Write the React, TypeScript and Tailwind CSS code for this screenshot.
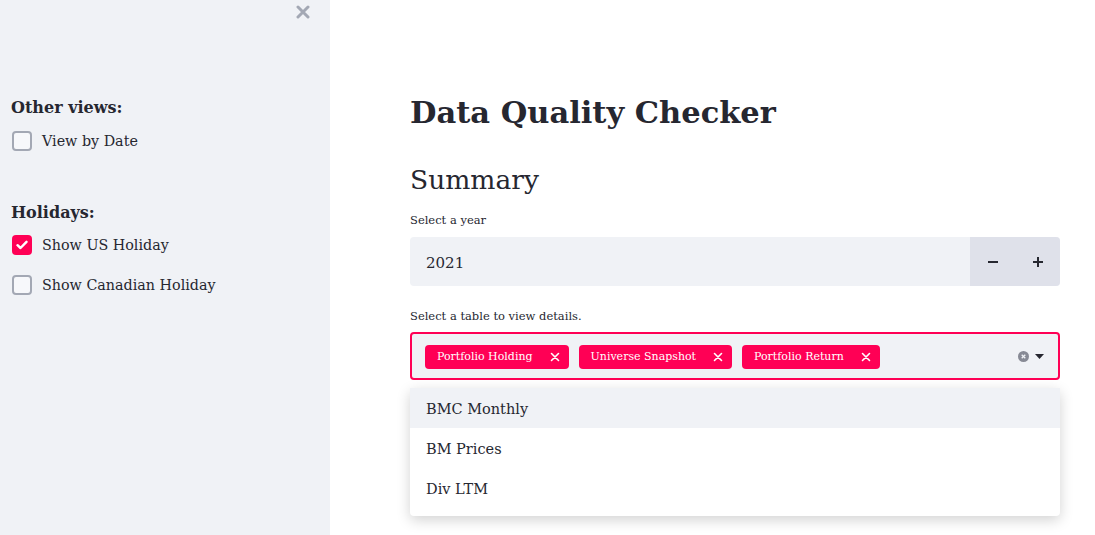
import React from "react";

const serif = "font-['DejaVu_Serif',serif]";

function Checkbox({ label, checked }: { label: string; checked?: boolean }) {
  return (
    <label className="flex items-center gap-[10px] h-[20px]">
      {checked ? (
        <span className="w-[20px] h-[20px] rounded-[4px] bg-[#ff0055] flex items-center justify-center">
          <svg width="12" height="10" viewBox="0 0 12 10">
            <path d="M1.5 5.2 L4.5 8 L10.5 1.8" fill="none" stroke="white" strokeWidth="2.4" strokeLinecap="round" strokeLinejoin="round" />
          </svg>
        </span>
      ) : (
        <span className="w-[20px] h-[20px] rounded-[4px] border-2 border-[#a3a8b4] bg-[#f7f8fb]" />
      )}
      <span className="text-[14.3px] text-[#262730] pt-[1px]">{label}</span>
    </label>
  );
}

function Tag({ label }: { label: string }) {
  return (
    <span className="h-[24px] rounded-[4px] bg-[#ff0055] text-white flex items-center pl-[12px] pr-[9px] gap-[17px] text-[11px]">
      <span className="pt-[2px]">{label}</span>
      <svg width="10" height="10" viewBox="0 0 10 10">
        <path d="M1.5 1.5 L8.5 8.5 M8.5 1.5 L1.5 8.5" stroke="white" strokeWidth="1.6" strokeLinecap="round" />
      </svg>
    </span>
  );
}

export default function App() {
  return (
    <div className={`flex w-[1095px] h-[535px] bg-white overflow-hidden ${serif}`}>
      <aside className="w-[330px] shrink-0 bg-[#f0f2f6] flex flex-col px-[11px]">
        <div className="flex justify-end h-[24px] pt-[5px] pr-[9px]">
          <svg width="14" height="14" viewBox="0 0 14 14">
            <path d="M2 2 L12 12 M12 2 L2 12" stroke="#a3a8b4" strokeWidth="3" strokeLinecap="round" />
          </svg>
        </div>
        <h3 className="mt-[73px] text-[16px] font-bold text-[#262730] leading-[22px]">Other views:</h3>
        <div className="mt-[12px] pl-[1px]">
          <Checkbox label="View by Date" />
        </div>
        <h3 className="mt-[51px] text-[16px] font-bold text-[#262730] leading-[22px]">Holidays:</h3>
        <div className="mt-[11px] pl-[1px] flex flex-col gap-[20px]">
          <Checkbox label="Show US Holiday" checked />
          <Checkbox label="Show Canadian Holiday" />
        </div>
      </aside>
      <main className="flex-1 pl-[80px] pr-[35px]">
        <div className="w-[650px]">
          <h1 className="mt-[90px] text-[30.5px] font-bold text-[#262730] leading-[44px]">Data Quality Checker</h1>
          <h2 className="mt-[28px] text-[26.5px] font-light text-[#262730] leading-[36px]">Summary</h2>
          <div className="mt-[14px] text-[11.5px] text-[#262730] leading-[16px]">Select a year</div>
          <div className="mt-[9px] h-[49px] rounded-[4px] bg-[#f0f2f6] flex overflow-hidden">
            <div className="flex-1 flex items-center pl-[16px] pt-[3px] text-[15px] text-[#262730]">2021</div>
            <div className="w-[90px] bg-[#dfe1ea] flex items-center">
              <span className="flex-1 flex justify-center">
                <svg width="10" height="2" viewBox="0 0 10 2"><rect width="10" height="2" fill="#262730" /></svg>
              </span>
              <span className="flex-1 flex justify-center">
                <svg width="10" height="10" viewBox="0 0 10 10"><path d="M0 5 H10 M5 0 V10" stroke="#262730" strokeWidth="2" /></svg>
              </span>
            </div>
          </div>
          <div className="mt-[22px] text-[11.5px] text-[#262730] leading-[16px]">Select a table to view details.</div>
          <div className="relative mt-[8px]">
            <div className="h-[48px] rounded-[4px] border-2 border-[#ff0055] bg-[#f0f2f6] flex items-center pl-[13px] pr-[14px]">
              <div className="flex gap-[10px] flex-1 pt-[1px]">
                <Tag label="Portfolio Holding" />
                <Tag label="Universe Snapshot" />
                <Tag label="Portfolio Return" />
              </div>
              <div className="flex items-center gap-[6px]">
                <svg width="11" height="11" viewBox="0 0 11 11">
                  <circle cx="5.5" cy="5.5" r="5.5" fill="#878a95" />
                  <path d="M3.7 3.7 L7.3 7.3 M7.3 3.7 L3.7 7.3" stroke="#f0f2f6" strokeWidth="1.3" />
                </svg>
                <svg width="9" height="5" viewBox="0 0 9 5"><path d="M0 0 H9 L4.5 5 Z" fill="#262730" /></svg>
              </div>
            </div>
            <ul className="absolute left-0 right-0 top-[56px] bg-white rounded-[4px] shadow-[0_4px_14px_rgba(0,0,0,0.18)] text-[14.5px] text-[#262730]">
              <li className="h-[40px] flex items-center pl-[16px] pt-[4px] bg-[#f0f2f6]">BMC Monthly</li>
              <li className="h-[40px] flex items-center pl-[16px] pt-[4px]">BM Prices</li>
              <li className="h-[40px] flex items-center pl-[16px] pt-[4px] mb-[8px]">Div LTM</li>
            </ul>
          </div>
        </div>
      </main>
    </div>
  );
}
